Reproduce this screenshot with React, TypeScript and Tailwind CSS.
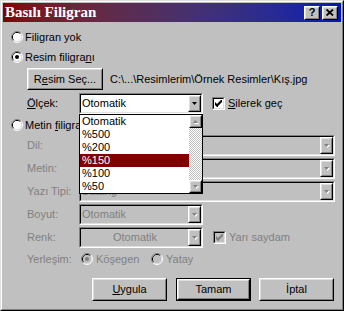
const sunkenOuter = 'border border-t-[#808080] border-l-[#808080] border-r-white border-b-white';
const sunkenInner = 'border border-t-black border-l-black border-r-[#dfdfdf] border-b-[#dfdfdf]';
const raisedOuter = 'border border-t-white border-l-white border-r-black border-b-black';
const raisedInner = 'border border-t-[#dfdfdf] border-l-[#dfdfdf] border-r-[#808080] border-b-[#808080]';

const scaleOptions = ['Otomatik', '%500', '%200', '%150', '%100', '%50'];

function Radio({ checked = false, disabled = false }: { checked?: boolean; disabled?: boolean }) {
  return (
    <svg width="12" height="12" viewBox="0 0 12 12" className="shrink-0">
      <path d="M2.11 9.89A5.5 5.5 0 0 1 9.89 2.11" stroke="#808080" fill="none" />
      <path d="M9.89 2.11A5.5 5.5 0 0 1 2.11 9.89" stroke="#ffffff" fill="none" />
      <path d="M2.82 9.18A4.5 4.5 0 0 1 9.18 2.82" stroke="#000000" fill="none" />
      <path d="M9.18 2.82A4.5 4.5 0 0 1 2.82 9.18" stroke="#dfdfdf" fill="none" />
      <circle cx="6" cy="6" r="4" fill={disabled ? '#c0c0c0' : '#ffffff'} />
      {checked && <circle cx="6" cy="6" r="2" fill={disabled ? '#808080' : '#000000'} />}
    </svg>
  );
}

function CheckBox({ disabled = false }: { disabled?: boolean }) {
  return (
    <div className={`w-[13px] h-[13px] shrink-0 ${sunkenOuter}`}>
      <div className={`h-full flex items-center justify-center ${sunkenInner} ${disabled ? 'bg-[#c0c0c0]' : 'bg-white'}`}>
        <svg width="7" height="7" viewBox="0 0 7 7">
          <path d="M0 2L2 4L6 0L7 0L7 2L3 6L3 7L2 7L0 5Z" fill={disabled ? '#808080' : '#000000'} />
        </svg>
      </div>
    </div>
  );
}

function Arrow({ up = false, disabled = false }: { up?: boolean; disabled?: boolean }) {
  const d = up ? 'M0 3h5L2.5 0z' : 'M0 0h5L2.5 3z';
  return (
    <svg width="6" height="4" viewBox="0 0 6 4">
      {disabled && <path d={d} fill="#ffffff" transform="translate(1 1)" />}
      <path d={d} fill={disabled ? '#808080' : '#000000'} />
    </svg>
  );
}

function SmallButton({ up = false, disabled = false, className = '' }: { up?: boolean; disabled?: boolean; className?: string }) {
  return (
    <div className={`${raisedOuter} ${className}`}>
      <div className={`h-full flex items-center justify-center bg-[#c0c0c0] ${raisedInner}`}>
        <Arrow up={up} disabled={disabled} />
      </div>
    </div>
  );
}

function Combo({
  width,
  text,
  disabled = false,
  center = false,
  children,
}: {
  width: string;
  text?: string;
  disabled?: boolean;
  center?: boolean;
  children?: React.ReactNode;
}) {
  return (
    <div className={`relative h-[21px] shrink-0 ${width} ${sunkenOuter}`}>
      <div className={`h-full flex ${sunkenInner} ${disabled ? 'bg-[#c0c0c0] text-[#808080]' : 'bg-white text-black'}`}>
        <div className={`flex-1 flex items-center pl-[1px] ${center ? 'justify-center' : ''}`}>{text}</div>
        <SmallButton disabled={disabled} className="w-[13px] h-full" />
      </div>
      {children}
    </div>
  );
}

function PushButton({ label, isDefault = false }: { label: React.ReactNode; isDefault?: boolean }) {
  return (
    <div className={`w-[75px] h-[23px] shrink-0 ${isDefault ? 'border border-black' : ''}`}>
      <div className={`h-full ${raisedOuter}`}>
        <div className={`h-full flex items-center justify-center ${raisedInner}`}>{label}</div>
      </div>
    </div>
  );
}

function ScaleList() {
  return (
    <div className="absolute left-[-1px] top-[20px] z-10 w-[124px] h-[80px] border border-black bg-white flex">
      <div className="flex-1">
        {scaleOptions.map((opt, i) => (
          <div
            key={i}
            className={`h-[13px] flex items-center pl-[2px] ${opt === '%150' ? 'bg-[#800000] text-white' : 'text-black'}`}
          >
            {opt}
          </div>
        ))}
      </div>
      <div className="w-[13px] flex flex-col">
        <SmallButton up disabled className="h-[13px]" />
        <div className="flex-1 bg-[repeating-conic-gradient(#c0c0c0_0_25%,#ffffff_0_50%)] bg-[length:2px_2px]" />
        <SmallButton disabled className="h-[13px]" />
      </div>
    </div>
  );
}

export default function App() {
  return (
    <div className="w-[344px] h-[311px] border border-t-[#dfdfdf] border-l-[#dfdfdf] border-r-black border-b-black font-['Liberation_Sans',Arial,sans-serif] text-[11px] leading-[13px] text-black">
      <div className="h-full border border-t-white border-l-white border-r-[#808080] border-b-[#808080] bg-[#c0c0c0] p-px">
        {/* title bar */}
        <div className="h-[19px] flex items-center justify-between bg-gradient-to-r from-[#800000] to-[#0414b4] pl-[2px] pr-[3px]">
          <span className="font-['Liberation_Serif','Times_New_Roman',serif] font-bold text-[15px] leading-[17px] text-white">
            Basılı Filigran
          </span>
          <div className="flex gap-[2px]">
            <div className={`w-[16px] h-[14px] bg-[#c0c0c0] ${raisedOuter}`}>
              <div className={`h-full flex items-center justify-center font-bold text-[11px] leading-none ${raisedInner}`}>?</div>
            </div>
            <div className={`w-[16px] h-[14px] bg-[#c0c0c0] ${raisedOuter}`}>
              <div className={`h-full flex items-center justify-center ${raisedInner}`}>
                <svg width="8" height="7" viewBox="0 0 8 7">
                  <path d="M0.5 0.5L7 6.5M7 0.5L0.5 6.5" stroke="#000" strokeWidth="1.8" />
                </svg>
              </div>
            </div>
          </div>
        </div>

        <div className="mt-[8px] ml-[8px] h-[14px] flex items-center gap-[2px]">
          <Radio />
          <span>Filigran yok</span>
        </div>

        <div className="mt-[6px] ml-[8px] h-[14px] flex items-center gap-[2px]">
          <Radio checked />
          <span>
            Resim filigra<span className="underline">n</span>ı
          </span>
        </div>

        <div className="mt-[4px] ml-[24px] h-[22px] flex items-center">
          <div className={`w-[76px] h-[22px] ${raisedOuter}`}>
            <div className={`h-full flex items-center justify-center ${raisedInner}`}>
              <span>
                R<span className="underline">e</span>sim Seç...
              </span>
            </div>
          </div>
          <span className="ml-[7px]">C:\...\Resimlerim\Örnek Resimler\Kış.jpg</span>
        </div>

        <div className="mt-[3px] ml-[24px] h-[21px] flex items-center">
          <span className="w-[52px]">
            <span className="underline">Ö</span>lçek:
          </span>
          <Combo width="w-[124px]" text="Otomatik">
            <ScaleList />
          </Combo>
          <div className="ml-[9px] flex items-center gap-[3px]">
            <CheckBox />
            <span>
              <span className="underline">S</span>ilerek geç
            </span>
          </div>
        </div>

        <div className="mt-[4px] ml-[8px] h-[14px] flex items-center gap-[2px]">
          <Radio />
          <span>
            Metin <span className="underline">f</span>iligranı
          </span>
        </div>

        <div className="mt-[3px] ml-[24px] h-[21px] flex items-center text-[#808080]">
          <span className="w-[52px]">Dil:</span>
          <Combo width="w-[256px]" disabled />
        </div>
        <div className="mt-[2px] ml-[24px] h-[21px] flex items-center text-[#808080]">
          <span className="w-[52px]">Metin:</span>
          <Combo width="w-[256px]" disabled />
        </div>
        <div className="mt-[2px] ml-[24px] h-[21px] flex items-center text-[#808080]">
          <span className="w-[52px]">Yazı Tipi:</span>
          <Combo width="w-[256px]" text="Batang" disabled />
        </div>
        <div className="mt-[2px] ml-[24px] h-[21px] flex items-center text-[#808080]">
          <span className="w-[52px]">Boyut:</span>
          <Combo width="w-[124px]" text="Otomatik" disabled />
        </div>
        <div className="mt-[2px] ml-[24px] h-[21px] flex items-center text-[#808080]">
          <span className="w-[52px]">Renk:</span>
          <Combo width="w-[124px]" text="Otomatik" disabled center />
          <div className="ml-[10px] flex items-center gap-[3px]">
            <CheckBox disabled />
            <span>Yarı saydam</span>
          </div>
        </div>

        <div className="mt-[4px] ml-[24px] h-[14px] flex items-center text-[#808080]">
          <span className="w-[54px]">Yerleşim:</span>
          <div className="w-[70px] flex items-center gap-[3px]">
            <Radio checked disabled />
            <span>Köşegen</span>
          </div>
          <div className="flex items-center gap-[3px]">
            <Radio disabled />
            <span>Yatay</span>
          </div>
        </div>

        <div className="mt-[12px] ml-[89px] flex">
          <PushButton label={<span><span className="underline">U</span>ygula</span>} />
          <div className="ml-[9px]">
            <PushButton label="Tamam" isDefault />
          </div>
          <div className="ml-[8px]">
            <PushButton label="İptal" />
          </div>
        </div>
      </div>
    </div>
  );
}
